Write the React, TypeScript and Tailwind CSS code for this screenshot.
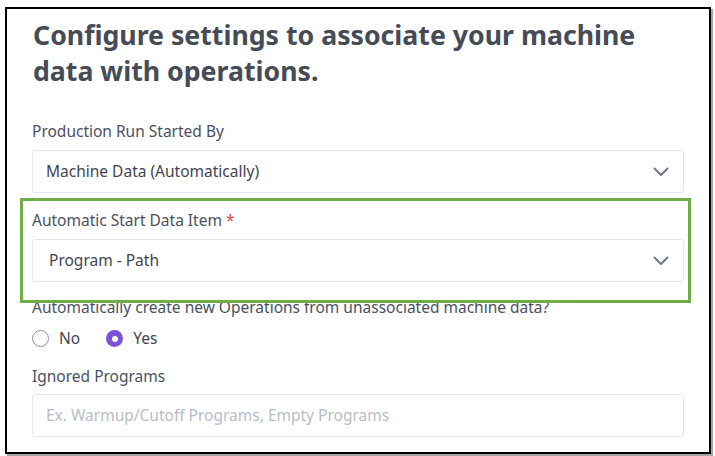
import type { ReactNode } from "react";

function Chevron() {
  return (
    <svg width="16" height="10" viewBox="0 0 16 10" fill="none" className="shrink-0">
      <polyline points="1.5,1.5 8,8 14.5,1.5" stroke="#6b7385" strokeWidth="1.8" strokeLinecap="round" strokeLinejoin="round" />
    </svg>
  );
}

function Select({ value, pad }: { value: string; pad: string }) {
  return (
    <div className={`h-[43px] rounded-[3px] border border-[#e3e8ef] bg-white flex items-center justify-between pr-[14px] ${pad}`}>
      <span className="text-[15.5px] text-[#3f4452]">{value}</span>
      <Chevron />
    </div>
  );
}

function Label({ children }: { children: ReactNode }) {
  return <p className="text-[15.5px] leading-[20px] text-[#4b5161]">{children}</p>;
}

export default function App() {
  return (
    <div className="w-[715px] h-[456px] bg-white pl-[5px] pt-[7px] font-['Noto_Sans',sans-serif] relative">
      <div className="w-[706px] h-[447px] border-2 border-black shadow-[2px_2px_1px_rgba(0,0,0,0.35)] px-[25px] pt-[8px]">
        <h1 className="text-[26.7px] font-bold leading-[36px] text-[#454b57] pl-[1px]">
          Configure settings to associate your machine
          <br />
          data with operations.
        </h1>

        <div className="mt-[32px]">
          <Label>Production Run Started By</Label>
          <div className="mt-[9px]">
            <Select value="Machine Data (Automatically)" pad="pl-[13px]" />
          </div>
        </div>

        <div className="mt-[17px]">
          <Label>
            Automatic Start Data Item <span className="text-[#e0474c]">*</span>
          </Label>
          <div className="mt-[9px]">
            <Select value="Program - Path" pad="pl-[16px]" />
          </div>
        </div>

        <div className="mt-[15px]">
          <Label>Automatically create new Operations from unassociated machine data?</Label>
          <div className="mt-[10px] flex items-center gap-[10px] text-[15.5px] text-[#3f4452]">
            <span className="w-[17px] h-[17px] rounded-full border-[1.5px] border-[#8a92a2] bg-white" />
            <span className="mr-[16px]">No</span>
            <span className="w-[17px] h-[17px] rounded-full bg-[#7b52d6] flex items-center justify-center">
              <span className="w-[6px] h-[6px] rounded-full bg-white" />
            </span>
            <span>Yes</span>
          </div>
        </div>

        <div className="mt-[16px]">
          <Label>Ignored Programs</Label>
          <div className="mt-[8px] h-[43px] rounded-[3px] border border-[#e3e8ef] bg-white flex items-center pl-[13px]">
            <span className="text-[15.5px] text-[#b7bdc8]">Ex. Warmup/Cutoff Programs, Empty Programs</span>
          </div>
        </div>
      </div>

      <div className="absolute left-[20px] top-[198px] w-[671px] h-[105px] border-[3px] border-[#70ad47] pointer-events-none" />
    </div>
  );
}
